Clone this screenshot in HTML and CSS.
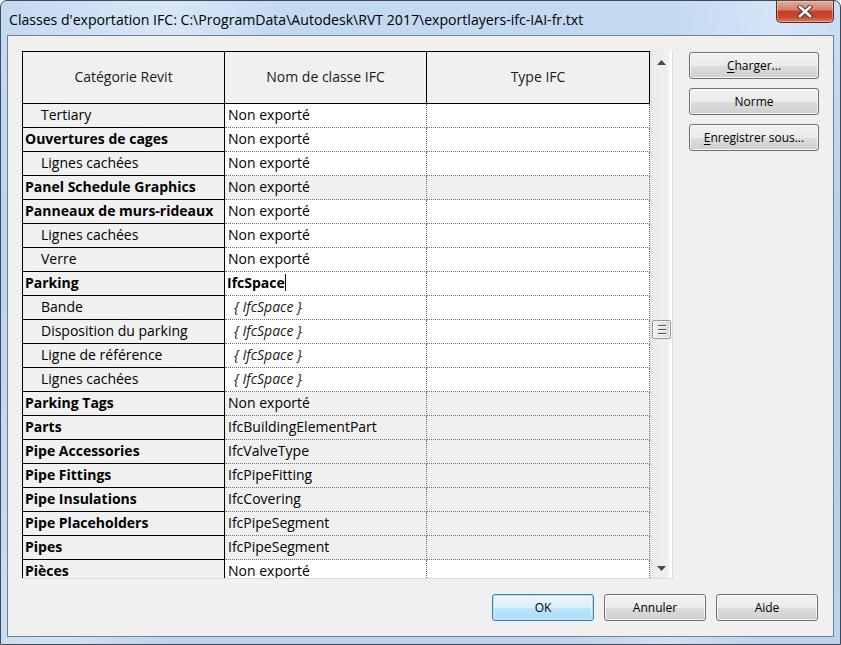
FILE: index.html
```html
<!DOCTYPE html>
<html lang="fr">
<head>
<meta charset="utf-8">
<title>Classes d'exportation IFC</title>
<link rel="stylesheet" href="styles.css">
</head>
<body>
<div class="window">
  <div class="titlebar">
    <span class="title">Classes d'exportation IFC: C:\ProgramData\Autodesk\RVT 2017\exportlayers-ifc-IAI-fr.txt</span>
    <div class="close">
      <svg width="16" height="13" viewBox="0 0 16 13">
        <path d="M3 2 L13 11 M13 2 L3 11" stroke="#4a3a36" stroke-width="4.6" stroke-linecap="square" fill="none"/>
        <path d="M3 2 L13 11 M13 2 L3 11" stroke="#ffffff" stroke-width="2.6" stroke-linecap="square" fill="none"/>
      </svg>
    </div>
  </div>
  <div class="client">
    <div class="main">
      <div class="gridwrap">
        <div class="grid">
          <div class="hd">Catégorie Revit</div>
          <div class="hd">Nom de classe IFC</div>
          <div class="hd">Type IFC</div>

          <div class="c1 sub">Tertiary</div><div class="c2">Non exporté</div><div class="c3"></div>
          <div class="c1">Ouvertures de cages</div><div class="c2">Non exporté</div><div class="c3"></div>
          <div class="c1 sub">Lignes cachées</div><div class="c2">Non exporté</div><div class="c3"></div>
          <div class="c1">Panel Schedule Graphics</div><div class="c2 g">Non exporté</div><div class="c3 g"></div>
          <div class="c1">Panneaux de murs-rideaux</div><div class="c2">Non exporté</div><div class="c3"></div>
          <div class="c1 sub">Lignes cachées</div><div class="c2">Non exporté</div><div class="c3"></div>
          <div class="c1 sub">Verre</div><div class="c2">Non exporté</div><div class="c3"></div>
          <div class="c1">Parking</div><div class="c2 edit"><span class="caret">IfcSpace</span></div><div class="c3"></div>
          <div class="c1 sub">Bande</div><div class="c2 inh">{ IfcSpace }</div><div class="c3"></div>
          <div class="c1 sub">Disposition du parking</div><div class="c2 inh">{ IfcSpace }</div><div class="c3"></div>
          <div class="c1 sub">Ligne de référence</div><div class="c2 inh">{ IfcSpace }</div><div class="c3"></div>
          <div class="c1 sub">Lignes cachées</div><div class="c2 inh">{ IfcSpace }</div><div class="c3"></div>
          <div class="c1">Parking Tags</div><div class="c2 g">Non exporté</div><div class="c3 g"></div>
          <div class="c1">Parts</div><div class="c2 g">IfcBuildingElementPart</div><div class="c3 g"></div>
          <div class="c1">Pipe Accessories</div><div class="c2 g">IfcValveType</div><div class="c3 g"></div>
          <div class="c1">Pipe Fittings</div><div class="c2 g">IfcPipeFitting</div><div class="c3 g"></div>
          <div class="c1">Pipe Insulations</div><div class="c2 g">IfcCovering</div><div class="c3 g"></div>
          <div class="c1">Pipe Placeholders</div><div class="c2 g">IfcPipeSegment</div><div class="c3 g"></div>
          <div class="c1">Pipes</div><div class="c2 g">IfcPipeSegment</div><div class="c3 g"></div>
          <div class="c1">Pièces</div><div class="c2">Non exporté</div><div class="c3"></div>
        </div>
        <div class="vscroll">
          <div class="sb-btn up">
            <svg width="9" height="5" viewBox="0 0 9 5"><path d="M0 5 L4.5 0 L9 5 Z" fill="#4a4a4a"/></svg>
          </div>
          <div class="sb-track">
            <div class="thumb" style="margin-top:247px">
              <span class="grip"></span><span class="grip"></span><span class="grip"></span>
            </div>
          </div>
          <div class="sb-btn down">
            <svg width="9" height="5" viewBox="0 0 9 5"><path d="M0 0 L9 0 L4.5 5 Z" fill="#4a4a4a"/></svg>
          </div>
        </div>
      </div>
      <div class="side">
        <button class="btn"><u>C</u>harger...</button>
        <button class="btn">Norme</button>
        <button class="btn"><u>E</u>nregistrer sous...</button>
      </div>
    </div>
    <div class="footer">
      <button class="btn btn-foot default">OK</button>
      <button class="btn btn-foot">Annuler</button>
      <button class="btn btn-foot">Aide</button>
    </div>
  </div>
</div>
</body>
</html>
```

FILE: styles.css
```css
html, body {
  margin: 0;
  padding: 0;
}
body {
  width: 841px;
  height: 645px;
  overflow: hidden;
  background: #ffffff;
  font-family: "Open Sans", "Noto Sans", "DejaVu Sans", sans-serif;
  color: #000;
}

.window {
  box-sizing: border-box;
  width: 841px;
  height: 645px;
  border: 1px solid #3f4a57;
  border-radius: 7px 7px 0 0;
  background:
    linear-gradient(100deg, rgba(255,255,255,0) 0%, rgba(255,255,255,0.35) 18%, rgba(255,255,255,0) 30%, rgba(255,255,255,0) 70%, rgba(255,255,255,0.3) 82%, rgba(255,255,255,0) 92%),
    linear-gradient(to bottom, #c4daf2, #b5cfec 40%, #bad3ee);
  padding: 0 6px 7px 6px;
  display: flex;
  flex-direction: column;
}

.titlebar {
  height: 34px;
  flex: none;
  display: flex;
  justify-content: space-between;
  align-items: flex-start;
}
.title {
  margin: 9px 0 0 2px;
  font-size: 14.1px;
  line-height: 19px;
  color: #000;
  white-space: nowrap;
}
.close {
  width: 58px;
  height: 22px;
  box-sizing: border-box;
  border: 1px solid #5a2c22;
  border-top: none;
  border-radius: 0 0 5px 5px;
  background: linear-gradient(to bottom, #e8a898 0%, #d8826e 40%, #c5402a 50%, #c8452e 75%, #de7a60 100%);
  display: flex;
  align-items: center;
  justify-content: center;
  box-shadow: inset 0 0 0 1px rgba(255,255,255,0.35);
}

.client {
  flex: 1;
  box-sizing: border-box;
  border: 1px solid #6f8196;
  background: #f0f0f0;
  padding: 15px 14px 0 14px;
  display: flex;
  flex-direction: column;
}

.main {
  display: flex;
  gap: 16px;
  align-items: flex-start;
}

.gridwrap {
  display: flex;
  height: 527px;
  overflow: hidden;
  border-right: 1px solid #dcdcdc;
  border-bottom: 1px solid #dcdcdc;
}

.grid {
  display: grid;
  grid-template-columns: 202px 202px 223px;
  grid-template-rows: 52px;
  grid-auto-rows: 24px;
  border-left: 1px solid #000;
  border-top: 1px solid #000;
  align-content: start;
  font-size: 14px;
  color: #000;
}
.grid > div {
  box-sizing: border-box;
  display: flex;
  align-items: center;
  white-space: nowrap;
  overflow: hidden;
  padding-bottom: 2px;
}
.hd {
  background: #f0f0f0;
  border-right: 1px solid #000;
  border-bottom: 1px solid #000;
  justify-content: center;
  color: #1a1a1a;
}
.c1 {
  background: #f0f0f0;
  border-right: 1px solid #000;
  border-bottom: 1px solid #000;
  font-weight: 700;
  padding-left: 2px;
}
.c1.sub {
  font-weight: 400;
  padding-left: 18px;
}
.c2, .c3 {
  background: #ffffff;
  border-right: 1px dotted #6e6e6e;
  border-bottom: 1px dotted #6e6e6e;
}
.c2 {
  padding-left: 3px;
}
.g {
  background: #f0f0f0 !important;
}
.edit {
  font-weight: 700;
}
.caret {
  border-right: 1px solid #000;
  line-height: 17px;
  margin-left: -1px;
}
.inh {
  font-style: italic;
  padding-left: 9px !important;
  color: #1a1a1a;
}

.vscroll {
  width: 23px;
  display: flex;
  flex-direction: column;
  background: linear-gradient(to right, #e2e2e2 0%, #ececec 15%, #efefef 80%, #ffffff 95%);
}
.sb-btn {
  display: flex;
  align-items: center;
  justify-content: center;
  flex: none;
}
.sb-btn.up {
  height: 22px;
}
.sb-btn.down {
  height: 19px;
}
.sb-track {
  flex: 1;
}
.thumb {
  width: 19px;
  height: 19px;
  margin-left: 2px;
  box-sizing: border-box;
  border: 1px solid #979797;
  border-radius: 2px;
  background: linear-gradient(to right, #f4f4f4, #e4e4e4 50%, #d8d8d8);
  box-shadow: inset 0 0 0 1px rgba(255,255,255,0.7);
  display: flex;
  flex-direction: column;
  align-items: center;
  justify-content: center;
  gap: 2px;
}
.grip {
  display: block;
  width: 8px;
  height: 1px;
  background: #555;
  border-bottom: 1px solid #fff;
}

.side {
  display: flex;
  flex-direction: column;
  gap: 9px;
  margin-top: 1px;
}

.btn {
  box-sizing: border-box;
  width: 130px;
  height: 27px;
  border: 1px solid #707070;
  border-radius: 3px;
  background: linear-gradient(to bottom, #f2f2f2 0%, #ebebeb 50%, #dddddd 51%, #cfcfcf 100%);
  box-shadow: inset 0 0 0 1px rgba(255,255,255,0.75);
  font-family: "Open Sans", "Noto Sans", sans-serif;
  font-size: 12px;
  color: #000;
  padding: 0;
  margin: 0;
}
.btn u {
  text-decoration: underline;
  text-underline-offset: 2px;
}

.footer {
  display: flex;
  justify-content: flex-end;
  gap: 10px;
  margin-top: 15px;
  margin-right: 1px;
}
.btn-foot {
  width: 102px;
}
.btn.default {
  border-color: #3c7fb1;
  background: linear-gradient(to bottom, #eaf6fd 0%, #d9f0fc 50%, #bee6fd 51%, #a7d9f5 100%);
  box-shadow: inset 0 0 0 1px #a8e4fd, inset 0 0 0 2px rgba(255,255,255,0.4);
}
```
